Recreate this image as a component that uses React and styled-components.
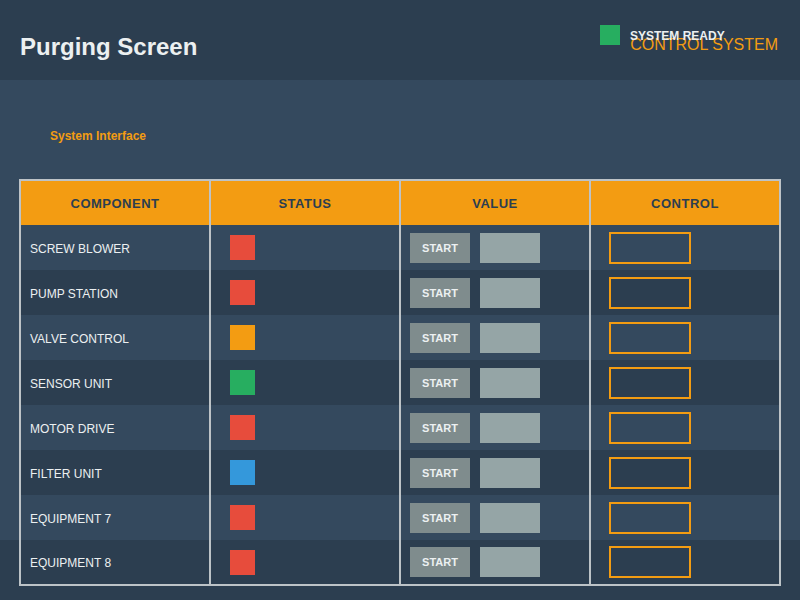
import React from 'react';
import styled, { createGlobalStyle } from 'styled-components';

const GlobalStyle = createGlobalStyle`
    body {
        margin: 0;
        background: #2c3e50;
        font-family: "Liberation Sans", Arial, sans-serif;
    }
`;

const Header = styled.header`
    position: relative;
    height: 80px;
    box-sizing: border-box;
    padding: 0 22px 0 20px;
    background: #2c3e50;
    display: flex;
    justify-content: space-between;
    align-items: flex-start;
`;

const Title = styled.h1`
    margin: 0;
    padding-top: 33px;
    font-size: 24px;
    font-weight: bold;
    color: #ecf0f1;
`;

const Brand = styled.div`
    margin-top: 36px;
    font-size: 16px;
    color: #f39c12;
`;

/* indicator sits on top of the brand text */
const StatusIndicator = styled.div`
    position: absolute;
    top: 25px;
    left: 600px;
    display: flex;
    align-items: center;
    gap: 10px;
`;

const Led = styled.span`
    width: 20px;
    height: 20px;
    background: ${(p) => p.$color};
`;

const StatusText = styled.span`
    margin-top: 2px;
    font-size: 12px;
    font-weight: bold;
    color: #ecf0f1;
`;

/* panel colour stops at 460px, the table runs on past it */
const Main = styled.main`
    padding: 20px 19px 14px;
    background: linear-gradient(#34495e 460px, #2c3e50 460px);
`;

const SectionLabel = styled.div`
    padding: 29px 31px 0;
    margin-bottom: 36px;
    font-size: 12px;
    font-weight: bold;
    color: #f39c12;
`;

const TableFrame = styled.div`
    border: 2px solid #bdc3c7;
`;

const GridRow = styled.div`
    display: grid;
    grid-template-columns: repeat(4, 1fr);
    column-gap: 2px;
    height: ${(p) => p.$height || 45}px;
    background: #bdc3c7;

    & > * {
        background: ${(p) => p.$bg};
    }

    &:last-child {
        height: 44px;
    }
`;

const HeadCell = styled.div`
    display: flex;
    align-items: center;
    justify-content: center;
    font-size: 13px;
    font-weight: bold;
    letter-spacing: 0.5px;
    color: #2c3e50;
`;

const Cell = styled.div`
    display: flex;
    align-items: center;
    gap: 10px;
    padding-left: ${(p) => p.$pad || 9}px;
`;

const NameText = styled.span`
    margin-top: 2px;
    font-size: 12px;
    color: #ecf0f1;
`;

const StatusSquare = styled.span`
    width: 25px;
    height: 25px;
    background: ${(p) => p.$color};
`;

const StartButton = styled.button`
    width: 60px;
    height: 30px;
    padding: 0;
    border: none;
    background: #7f8c8d;
    color: #ecf0f1;
    font-family: inherit;
    font-size: 11px;
    font-weight: bold;
`;

const ValueBox = styled.div`
    width: 60px;
    height: 30px;
    background: #95a5a6;
`;

const ControlBox = styled.div`
    width: 82px;
    height: 32px;
    box-sizing: border-box;
    border: 2px solid #f39c12;
`;

const colors = {
    red: '#e74c3c',
    orange: '#f39c12',
    green: '#27ae60',
    blue: '#3498db',
};

const components = [
    { name: 'SCREW BLOWER', status: 'red' },
    { name: 'PUMP STATION', status: 'red' },
    { name: 'VALVE CONTROL', status: 'orange' },
    { name: 'SENSOR UNIT', status: 'green' },
    { name: 'MOTOR DRIVE', status: 'red' },
    { name: 'FILTER UNIT', status: 'blue' },
    { name: 'EQUIPMENT 7', status: 'red' },
    { name: 'EQUIPMENT 8', status: 'red' },
];

export default function App() {
    return (
        <>
            <GlobalStyle />
            <Header>
                <Title>Purging Screen</Title>
                <Brand>CONTROL SYSTEM</Brand>
                <StatusIndicator>
                    <Led $color="#27ae60" />
                    <StatusText>SYSTEM READY</StatusText>
                </StatusIndicator>
            </Header>
            <Main>
                <SectionLabel>System Interface</SectionLabel>
                <TableFrame>
                    <GridRow $height={44} $bg="#f39c12">
                        <HeadCell>COMPONENT</HeadCell>
                        <HeadCell>STATUS</HeadCell>
                        <HeadCell>VALUE</HeadCell>
                        <HeadCell>CONTROL</HeadCell>
                    </GridRow>
                    {components.map((item, i) => (
                        <GridRow key={item.name} $bg={i % 2 ? '#2c3e50' : '#34495e'}>
                            <Cell>
                                <NameText>{item.name}</NameText>
                            </Cell>
                            <Cell $pad={19}>
                                <StatusSquare $color={colors[item.status]} />
                            </Cell>
                            <Cell>
                                <StartButton>START</StartButton>
                                <ValueBox />
                            </Cell>
                            <Cell $pad={18}>
                                <ControlBox />
                            </Cell>
                        </GridRow>
                    ))}
                </TableFrame>
            </Main>
        </>
    );
}
